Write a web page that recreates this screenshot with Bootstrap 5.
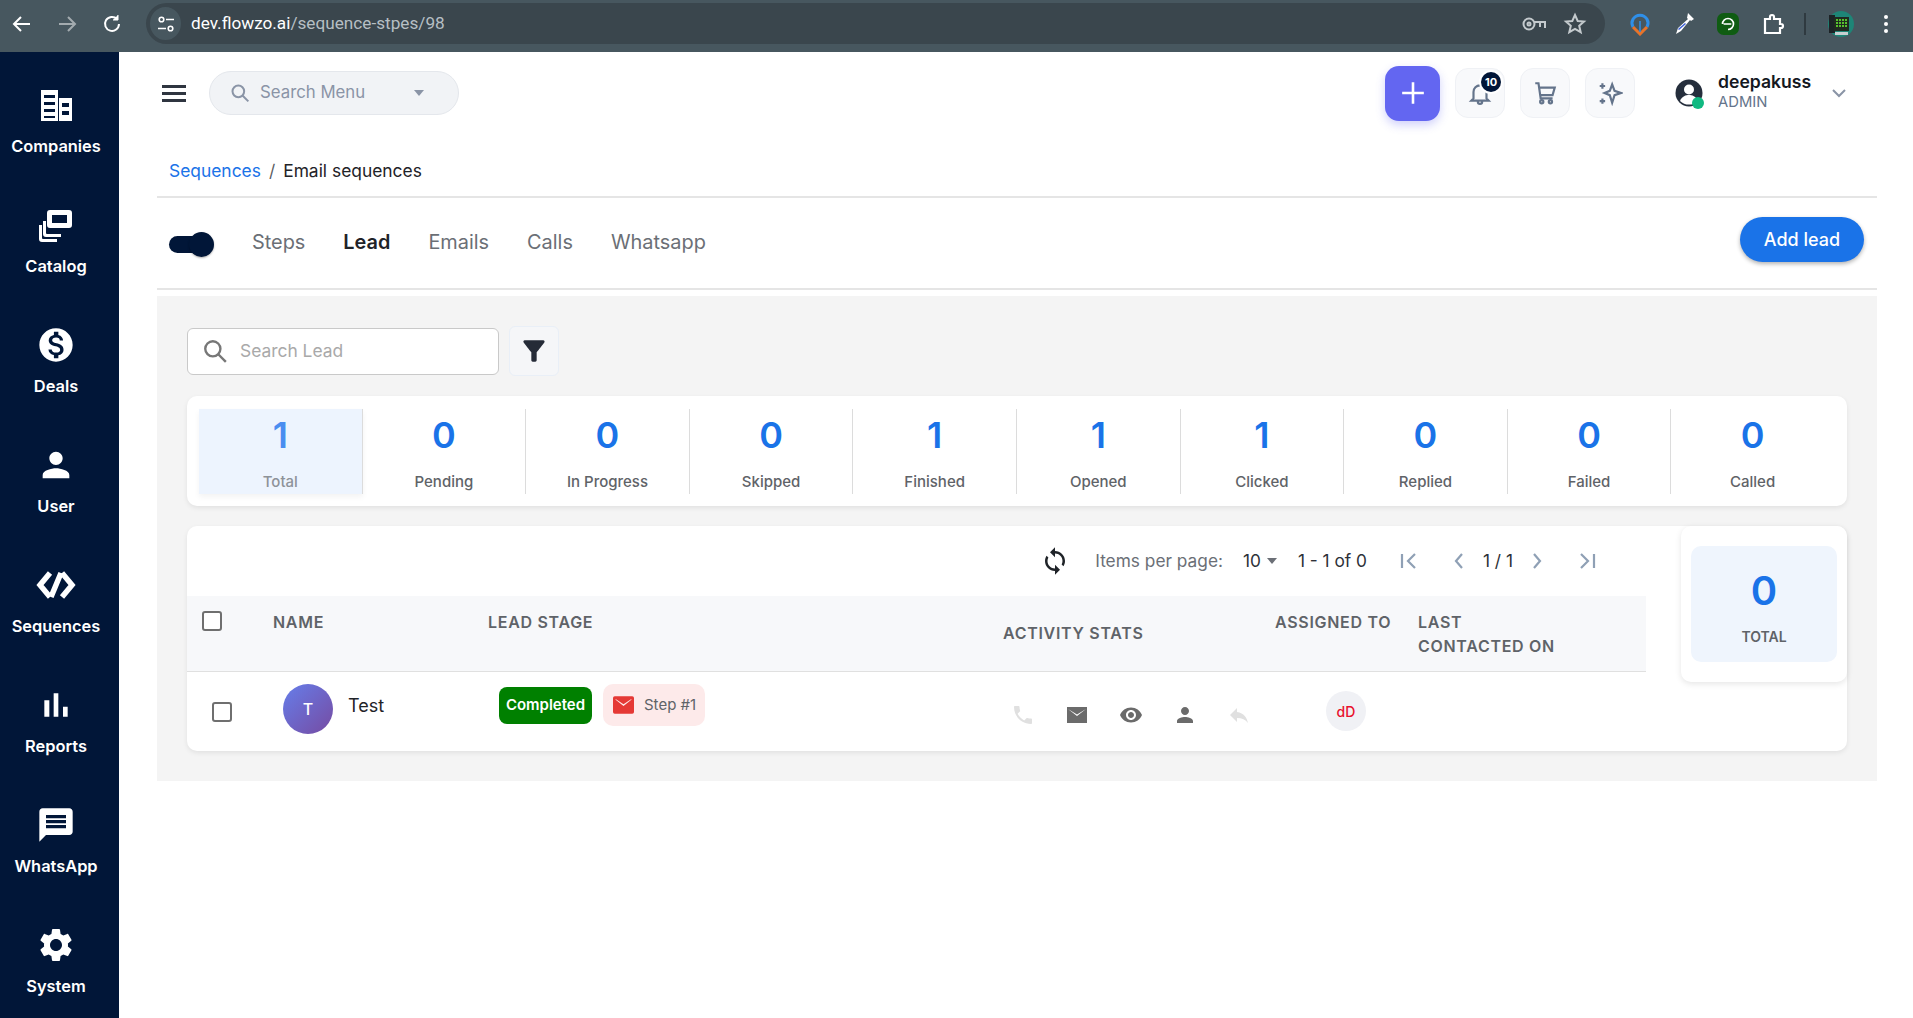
<!DOCTYPE html>
<html lang="en">
<head>
    <meta charset="UTF-8">
    <meta name="viewport" content="width=device-width, initial-scale=1.0">
    <title>Email sequences</title>
    <link href="https://cdn.jsdelivr.net/npm/bootstrap@5.3.0/dist/css/bootstrap.min.css" rel="stylesheet">
    <style>
        html, body { height: 100%; }
        body { font-family: Inter, "Liberation Sans", sans-serif; background: #fff; overflow: hidden; color: #1f2328; }

        /* browser bar */
        .chrome-bar { height: 52px; background: #47575f; padding: 3px 0 8px 0; }
        .chrome-btn { width: 24px; height: 24px; fill: none; stroke: #fff; stroke-width: 2; }
        .chrome-nav { width: 146px; padding-left: 10px; gap: 21px; }
        .chrome-pill { width: 1459px; height: 41px; border-radius: 21px; background: #3a464d; padding: 0 18px 0 4px; }
        .chrome-site { width: 31px; height: 33px; border-radius: 50%; background: #47575f; margin-right: 10px; }
        .chrome-url { font-family: Roboto, sans-serif; font-size: 17.2px; color: #fff; }
        .chrome-url span { color: #b6bfc4; }
        .chrome-exts { padding-left: 24px; gap: 22px; }
        .chrome-key { margin-right: 17px; }
        .chrome-sep { margin-left: -3px; }

        /* sidebar */
        .side-rail { width: 119px; flex: 0 0 119px; background: #011638; padding: 35px 7px 0 0; gap: 42px; height: 966px; overflow: hidden; }
        .side-item { height: 78px; color: #fff; font-size: 16.4px; font-weight: 600; text-decoration: none; gap: 11px; }
        .side-item svg { width: 36px; height: 36px; fill: #fff; }
        .side-item svg.mat-ico { width: 40px; height: 40px; margin: -2px 0; }
        .side-item svg.seq-ico { width: 40px; height: 36px; fill: none; stroke: #fff; stroke-width: 5.5; }

        /* header */
        .main-col { padding: 0 36px 0 38px; }
        .top-head { height: 82px; padding-left: 5px; }
        .menu-burger { width: 24px; height: 17px; border-top: 3px solid #2f3540; border-bottom: 3px solid #2f3540; position: relative; margin-right: 23px; }
        .menu-burger::after { content: ""; position: absolute; left: 0; right: 0; top: 4px; height: 3px; background: #2f3540; }
        .menu-search { width: 250px; height: 44px; border-radius: 22px; background: #f1f3f6; border: 1px solid #e4e7ec; padding: 0 34px 0 20px; color: #8a94a6; font-size: 16.8px; }
        .menu-search svg { width: 20px; height: 20px; margin-right: 10px; }
        .caret-down { width: 0; height: 0; border-left: 5px solid transparent; border-right: 5px solid transparent; border-top: 6px solid #8a94a6; }
        .plus-btn { width: 55px; height: 55px; border-radius: 14px; background: #6366f1; box-shadow: 0 4px 10px rgba(99,102,241,.3); margin-right: 15px; border: 0; }
        .plus-btn svg { width: 26px; height: 26px; stroke: #fff; stroke-width: 2.4; }
        .tool-box { width: 50px; height: 50px; border-radius: 13px; background: #f8f9fb; border: 1px solid #eff1f5; margin-right: 15px; }
        .tool-box svg { width: 26px; height: 26px; fill: none; stroke: #64748b; stroke-width: 2; }
        .note-count { top: 3px; left: 25px; width: 20px; height: 20px; border-radius: 50%; background: #011638; color: #fff; font-size: 11px; font-weight: 700; line-height: 20px; text-align: center; box-shadow: 0 0 0 2px #fff; }
        .user-box { margin-left: 25px; width: 202px; }
        .user-pic { width: 28px; height: 28px; margin-right: 15px; }
        .status-dot { width: 12px; height: 12px; right: -1px; bottom: -2px; background: #10b981; border-radius: 50%; }
        .user-name { font-size: 17.6px; font-weight: 600; line-height: 22px; color: #14181f; margin-top: -3px; }
        .user-role { font-size: 14.8px; line-height: 19px; color: #64748b; }
        .user-chev { width: 16px; height: 16px; margin-left: 20px; fill: none; stroke: #8a94a6; stroke-width: 2; }

        /* breadcrumb and tabs */
        .crumb-wrap { height: 64px; padding: 12px 0 0 12px; border-bottom: 2px solid #e5e5e5; }
        .crumb-wrap .breadcrumb { --bs-breadcrumb-margin-bottom: 0; font-size: 17.4px; }
        .crumb-wrap a { color: #1a73e8; text-decoration: none; }
        .crumb-wrap .breadcrumb-item.active { color: #1f2328; }
        .tab-bar { height: 92px; padding: 0 13px 0 12px; border-bottom: 2px solid #e5e5e5; }
        .side-toggle { width: 45px; height: 25px; margin: 2px 38px 0 0; position: relative; }
        .side-toggle::before { content: ""; position: absolute; left: 0; right: 4px; top: 4px; height: 17px; background: #011638; border-radius: 9px; }
        .side-toggle::after { content: ""; position: absolute; right: 0; top: 0; width: 25px; height: 25px; background: #011638; border-radius: 50%; box-shadow: 0 1px 2px rgba(0,0,0,.3); }
        .tab-links { gap: 38px; }
        .tab-links .nav-link { padding: 0; font-size: 19.9px; color: #6b6f76; margin-top: -1px; }
        .tab-links .nav-link.active { color: #1f2328; font-weight: 600; }
        .add-btn { width: 124px; height: 45px; border-radius: 23px; background: #1a73e8; border: 0; color: #fff; font-size: 18px; font-weight: 500; box-shadow: 0 2px 4px rgba(0,0,0,.3); margin-top: -8px; }

        /* grey panel */
        .lead-panel { margin-top: 6px; background: #f4f4f4; padding: 30px; height: 485px; }
        .lead-search { width: 312px; height: 47px; background: #fff; border: 1px solid #c9c9c9; border-radius: 6px; padding: 0 14px; margin-right: 10px; }
        .lead-search svg { width: 26px; height: 26px; flex: 0 0 26px; fill: none; stroke: #777; stroke-width: 2.2; margin-right: 12px; }
        .lead-search input { border: 0; padding: 0; font-size: 17.4px; background: transparent; box-shadow: none; }
        .lead-search input::placeholder { color: #a9a9a9; }
        .funnel-btn { width: 50px; height: 50px; border-radius: 6px; background: #f5f6f8; border: 1px solid #e9eff7; }
        .funnel-btn svg { width: 32px; height: 32px; fill: #252b37; }

        .stat-strip { margin-top: 20px; background: #fff; border-radius: 10px; padding: 13px 13px 12px 12px; box-shadow: 0 2px 5px rgba(0,0,0,.08); }
        .stat-cell { flex: 1 1 0; height: 85px; border-right: 1px solid #dcdcdc; text-align: center; }
        .stat-cell:last-child { border-right: 0; }
        .stat-cell.is-current { background: #edf4fe; box-shadow: 0 3px 6px rgba(0,0,0,.05); }
        .stat-num { height: 52px; line-height: 52px; font-size: 36px; font-weight: 600; color: #1a73e8; }
        .stat-lbl { margin-top: 9px; line-height: 24px; font-size: 15px; font-weight: 500; color: #5f6368; }
        .is-current .stat-num { color: #4a8df0; }
        .is-current .stat-lbl { color: #8d9299; }

        .table-card { margin-top: 20px; height: 225px; background: #fff; border-radius: 10px; box-shadow: 0 2px 5px rgba(0,0,0,.08); }
        .table-left { width: 1459px; }
        .pager-row { height: 70px; padding-right: 47px; font-size: 17.3px; color: #2d3138; }
        .pager-row svg { fill: none; stroke: #8fa0b5; stroke-width: 2.2; width: 24px; height: 24px; }
        .pager-row svg.sync-ico { fill: #1f2328; stroke: none; width: 30px; height: 30px; margin-right: 25px; }
        .pager-lbl { color: #6b6f76; margin-right: 20px; }
        .pager-size { margin-right: 21px; gap: 6px; }
        .pager-size .caret-down { border-top-color: #6b6f76; }
        .pager-range { margin-right: 30px; }
        .pager-page { margin: 0 12px; }
        .pager-gap { margin-left: 26px; }

        .lead-table { table-layout: fixed; width: 1459px; margin: 0; }
        .lead-table th { background: #f7f8fa; height: 75px; padding: 14px 10px 12px; line-height: 24px; font-size: 16px; font-weight: 600; letter-spacing: .7px; color: #5f6368; vertical-align: top; border-bottom: 1px solid #e0e0e0; text-transform: uppercase; }
        .lead-table th.mid-head { vertical-align: middle; padding-top: 0; padding-bottom: 0; }
        .lead-table td { height: 80px; padding: 0; border: 0; vertical-align: middle; }
        .col-check { width: 76px; }
        .col-name { width: 215px; }
        .col-stage { width: 515px; }
        .col-stats { width: 272px; }
        .col-owner { width: 143px; }
        .col-last { width: 238px; }
        .lead-check.form-check-input { width: 20px; height: 20px; margin: 0; border: 2px solid #6f6f6f; border-radius: 3px; }
        .lead-check.check-head { margin: 1px 0 0 5px; }
        .lead-check.check-row { margin: 3px 0 0 25px; }
        .name-wrap { padding-left: 20px; margin-top: -4px; }
        .lead-avatar { width: 50px; height: 50px; border-radius: 50%; background: linear-gradient(135deg, #667eea, #764ba2); color: #fff; font-size: 16px; font-weight: 500; margin-right: 15px; }
        .lead-name { font-size: 18px; color: #1f2328; margin-top: -8px; }
        .stage-wrap { padding-left: 21px; margin-top: -12px; gap: 11px; }
        .stage-done { width: 93px; height: 37px; border-radius: 8px; background: #008000; color: #fff; font-size: 15px; font-weight: 600; }
        .stage-step { width: 102px; height: 42px; border-radius: 10px; background: #fdeaea; color: #5f6368; font-size: 15px; padding-left: 10px; gap: 10px; }
        .stage-step svg { width: 21px; height: 18px; }
        .act-wrap { padding-left: 18px; gap: 30px; margin-top: 8px; }
        .act-wrap svg { width: 24px; height: 24px; fill: #6b6b6b; }
        .act-wrap svg.act-off { fill: #e0e0e0; }
        .owner-pic { width: 40px; height: 40px; margin-left: 61px; border-radius: 50%; background: #f0f1f5; color: #e8112d; font-size: 14px; font-weight: 500; }

        .total-card { width: 166px; height: 156px; margin-left: 35px; background: #fff; border-radius: 10px; padding: 20px 10px; box-shadow: 0 2px 6px rgba(0,0,0,.1); }
        .total-box { height: 116px; background: #eff5fd; border-radius: 10px; text-align: center; padding-top: 19px; }
        .total-num { font-size: 40px; line-height: 52px; font-weight: 600; color: #1a73e8; }
        .total-lbl { margin-top: 10px; font-size: 14px; line-height: 20px; font-weight: 600; color: #5f6368; }
    </style>
</head>
<body>
    <!-- browser bar -->
    <div class="chrome-bar d-flex align-items-center">
        <div class="chrome-nav d-flex align-items-center">
            <svg class="chrome-btn" viewBox="0 0 24 24"><path d="M20 12H5M11 5l-7 7 7 7"/></svg>
            <svg class="chrome-btn opacity-50" viewBox="0 0 24 24"><path d="M4 12h15M13 5l7 7-7 7"/></svg>
            <svg class="chrome-btn" viewBox="0 0 24 24"><path d="M19 12a7 7 0 1 1-2-5"/><path d="M18 3v5h-5" fill="#fff" stroke-width="1"/></svg>
        </div>
        <div class="chrome-pill d-flex align-items-center">
            <div class="chrome-site d-flex align-items-center justify-content-center">
                <svg width="18" height="18" viewBox="0 0 18 18" fill="none" stroke="#fff" stroke-width="1.6"><circle cx="4.5" cy="4.5" r="2.3"/><path d="M9 4.5h8M1 13.5h8"/><circle cx="13.5" cy="13.5" r="2.3"/></svg>
            </div>
            <div class="chrome-url">dev.flowzo.ai<span>/sequence-stpes/98</span></div>
            <svg class="ms-auto chrome-key" width="24" height="16" viewBox="0 0 24 16" fill="none" stroke="#c4cacd" stroke-width="2"><circle cx="7" cy="8" r="5.5"/><circle cx="7" cy="8" r="1.5"/><path d="M12 6h11v6M18 6v5"/></svg>
            <svg width="24" height="24" viewBox="0 0 24 24" fill="none" stroke="#c4cacd" stroke-width="2"><path d="M12 3l2.700 6 6.300.6-4.800 4.200 1.500 6.400L12 17l-5.700 3.200 1.500-6.400L3 9.600 9.300 9z"/></svg>
        </div>
        <div class="chrome-exts d-flex align-items-center flex-grow-1">
            <svg width="22" height="24" viewBox="0 0 22 24" fill="none"><path d="M4 15a8 8 0 1 1 14 0" stroke="#2f8fe8" stroke-width="3"/><path d="M4 15l7 7 7-7" stroke="#e8742a" stroke-width="3"/><path d="M11 9v11" stroke="#2f8fe8" stroke-width="1.5"/></svg>
            <svg width="22" height="24" viewBox="0 0 22 24" fill="#fff"><path d="M15 1l6 6-3 2-1-1-9 11-5 3 2-6 10-9-1-1z"/><path d="M5 17l7-6 1 1-7 6z" fill="#3f62d8"/></svg>
            <svg width="22" height="22" viewBox="0 0 20 20"><rect width="20" height="20" rx="6" fill="#0f5c12"/><path d="M5 10a5 5 0 1 1 5 5M6 10h7" fill="none" stroke="#fff" stroke-width="1.500"/></svg>
            <svg width="24" height="24" viewBox="0 0 24 24" fill="none" stroke="#fff" stroke-width="2.200"><path d="M4 7h5V5a2 2 0 0 1 4 0v2h6v5h1a2 2 0 0 1 0 4h-1v5H4z"/></svg>
            <svg class="chrome-sep" width="2" height="22" viewBox="0 0 2 22"><rect width="2" height="22" fill="#2f3a40"/></svg>
            <svg width="26" height="26" viewBox="0 0 26 26"><circle cx="13" cy="13" r="13" fill="#1e8577"/><rect x="1" y="4" width="6" height="18" fill="#1c2326"/><rect x="6" y="6" width="15" height="14" fill="#202a20"/><path d="M8 9h11M8 12h11M8 15h11" stroke="#57c22e" stroke-width="2" stroke-dasharray="2 1"/><rect x="7" y="21" width="13" height="3" fill="#c8ced0"/></svg>
            <svg class="ms-2" width="4" height="18" viewBox="0 0 4 18" fill="#fff"><circle cx="2" cy="2" r="2"/><circle cx="2" cy="9" r="2"/><circle cx="2" cy="16" r="2"/></svg>
        </div>
    </div>

    <div class="d-flex">
        <!-- sidebar -->
        <nav class="side-rail d-flex flex-column align-items-center">
            <a class="side-item d-flex flex-column align-items-center" href="#">
                <svg viewBox="0 0 36 36"><path d="M3 3h17v31H3zM21 11h13v23H21z"/><path d="M6 8h11v3H6zM6 15h11v3H6zM6 22h11v3H6zM6 29h11v2H6zM24 16h7v4h-7zM24 24h7v4h-7z" fill="#011638"/></svg>
                Companies
            </a>
            <a class="side-item d-flex flex-column align-items-center" href="#">
                <svg viewBox="0 0 36 36"><path d="M12 3h19a3 3 0 0 1 3 3v12a3 3 0 0 1-3 3H12a3 3 0 0 1-3-3V6a3 3 0 0 1 3-3zm2 5v8h15V8z" fill-rule="evenodd"/><path d="M5 14v13a3 3 0 0 0 3 3h15v-3H9a1 1 0 0 1-1-1V14zM1 18v14a3 3 0 0 0 3 3h15v-3H5a1 1 0 0 1-1-1V18z"/></svg>
                Catalog
            </a>
            <a class="side-item d-flex flex-column align-items-center" href="#">
                <svg class="mat-ico" viewBox="0 0 24 24"><path d="M12 2C6.480 2 2 6.480 2 12s4.480 10 10 10 10-4.480 10-10S17.520 2 12 2zm1.410 16.090V20h-2.670v-1.930c-1.710-.360-3.160-1.460-3.270-3.400h1.960c.100 1.050.820 1.870 2.650 1.870 1.960 0 2.400-.980 2.400-1.590 0-.830-.440-1.610-2.670-2.140-2.480-.600-4.180-1.620-4.180-3.670 0-1.720 1.390-2.840 3.110-3.210V4h2.670v1.950c1.860.450 2.790 1.860 2.850 3.390H14.300c-.050-1.110-.640-1.870-2.220-1.870-1.500 0-2.400.680-2.400 1.640 0 .840.650 1.390 2.670 1.910s4.180 1.390 4.180 3.910c-.010 1.830-1.380 2.830-3.120 3.160z"/></svg>
                Deals
            </a>
            <a class="side-item d-flex flex-column align-items-center" href="#">
                <svg class="mat-ico" viewBox="0 0 24 24"><path d="M12 12c2.210 0 4-1.790 4-4s-1.790-4-4-4-4 1.790-4 4 1.790 4 4 4zm0 2c-2.670 0-8 1.340-8 4v2h16v-2c0-2.660-5.330-4-8-4z"/></svg>
                User
            </a>
            <a class="side-item d-flex flex-column align-items-center" href="#">
                <svg class="seq-ico" viewBox="0 0 40 36"><path d="M14 6L4 18l10 12M26 6l10 12-10 12M25 6L15 30"/></svg>
                Sequences
            </a>
            <a class="side-item d-flex flex-column align-items-center" href="#">
                <svg class="mat-ico" viewBox="0 0 24 24"><path d="M5 9.200h3V19H5zM10.600 5h2.800v14h-2.800zm5.600 8H19v6h-2.800z"/></svg>
                Reports
            </a>
            <a class="side-item d-flex flex-column align-items-center" href="#">
                <svg class="mat-ico" viewBox="0 0 24 24"><path d="M20 2H4c-1.100 0-1.990.900-1.990 2L2 22l4-4h14c1.100 0 2-.900 2-2V4c0-1.100-.900-2-2-2zm-2 12H6v-2h12v2zm0-3H6V9h12v2zm0-3H6V6h12v2z"/></svg>
                WhatsApp
            </a>
            <a class="side-item d-flex flex-column align-items-center" href="#">
                <svg class="mat-ico" viewBox="0 0 24 24"><path d="M19.140 12.940c.040-.300.060-.610.060-.940 0-.320-.020-.640-.070-.940l2.030-1.580c.180-.140.230-.410.120-.610l-1.920-3.320c-.120-.220-.370-.290-.590-.220l-2.390.960c-.500-.380-1.030-.700-1.620-.940l-.360-2.540c-.040-.240-.240-.410-.480-.410h-3.840c-.240 0-.430.170-.470.410l-.360 2.540c-.590.240-1.130.570-1.620.940l-2.390-.960c-.220-.080-.470 0-.590.220L2.740 8.870c-.120.210-.080.470.120.610l2.030 1.580c-.050.300-.090.630-.090.940s.020.640.070.940l-2.030 1.580c-.180.140-.230.410-.12.610l1.920 3.320c.120.220.370.290.590.220l2.390-.960c.500.380 1.030.700 1.620.940l.360 2.540c.050.240.240.410.480.410h3.840c.240 0 .440-.170.470-.41l.360-2.540c.590-.240 1.130-.560 1.620-.940l2.390.960c.220.080.470 0 .590-.220l1.920-3.320c.120-.220.070-.470-.12-.610l-2.010-1.580zM12 15.600c-1.980 0-3.600-1.620-3.600-3.600s1.620-3.600 3.600-3.600 3.600 1.620 3.600 3.600-1.620 3.600-3.600 3.600z"/></svg>
                System
            </a>
        </nav>

        <div class="main-col flex-grow-1">
            <!-- top header -->
            <header class="top-head d-flex align-items-center">
                <div class="menu-burger"></div>
                <div class="menu-search d-flex align-items-center">
                    <svg viewBox="0 0 24 24" fill="none" stroke="#8a94a6" stroke-width="2.400"><circle cx="10" cy="10" r="7"/><path d="M15 15l7 7"/></svg>
                    <span>Search Menu</span>
                    <span class="caret-down ms-auto"></span>
                </div>
                <button class="plus-btn ms-auto d-flex align-items-center justify-content-center" type="button">
                    <svg viewBox="0 0 24 24"><path d="M12 2v20M2 12h20"/></svg>
                </button>
                <div class="tool-box position-relative d-flex align-items-center justify-content-center">
                    <svg viewBox="0 0 24 24"><path d="M6 17V11a6 6 0 0 1 12 0v6l2 2H4zM10 20a2 2 0 0 0 4 0"/></svg>
                    <span class="note-count position-absolute">10</span>
                </div>
                <div class="tool-box d-flex align-items-center justify-content-center">
                    <svg viewBox="0 0 24 24"><path d="M3 3h3l2 14h11M7 7h14l-2 7H8"/><circle cx="9" cy="20" r="1.500"/><circle cx="17" cy="20" r="1.500"/></svg>
                </div>
                <div class="tool-box d-flex align-items-center justify-content-center">
                    <svg viewBox="0 0 24 24"><path d="M14 4l2.200 6 5.800 2-5.800 2-2.200 7-2.200-7-4.800-2 4.800-2z"/><path d="M5 3v5M2.500 5.500h5M5 17v5M2.500 19.500h5"/></svg>
                </div>
                <div class="user-box d-flex align-items-center">
                    <div class="user-pic position-relative">
                        <svg width="28" height="28" viewBox="0 0 28 28"><circle cx="14" cy="14" r="13.500" fill="#252e3c"/><circle cx="14" cy="10.500" r="5" fill="#fff"/><path d="M5 22c2-5 6-6 9-6s7 1 9 6a13 13 0 0 1-18 0z" fill="#fff"/></svg>
                        <span class="status-dot position-absolute"></span>
                    </div>
                    <div>
                        <div class="user-name">deepakuss</div>
                        <div class="user-role">ADMIN</div>
                    </div>
                    <svg class="user-chev" viewBox="0 0 16 16"><path d="M2 5l6 6 6-6"/></svg>
                </div>
            </header>

            <!-- breadcrumb -->
            <div class="crumb-wrap d-flex align-items-center">
                <ol class="breadcrumb">
                    <li class="breadcrumb-item"><a href="#">Sequences</a></li>
                    <li class="breadcrumb-item active">Email sequences</li>
                </ol>
            </div>

            <!-- tabs -->
            <div class="tab-bar d-flex align-items-center">
                <div class="side-toggle"></div>
                <ul class="nav tab-links">
                    <li class="nav-item"><a class="nav-link" href="#">Steps</a></li>
                    <li class="nav-item"><a class="nav-link active" href="#">Lead</a></li>
                    <li class="nav-item"><a class="nav-link" href="#">Emails</a></li>
                    <li class="nav-item"><a class="nav-link" href="#">Calls</a></li>
                    <li class="nav-item"><a class="nav-link" href="#">Whatsapp</a></li>
                </ul>
                <button class="btn add-btn ms-auto" type="button">Add lead</button>
            </div>

            <div class="lead-panel">
                <div class="d-flex align-items-center">
                    <div class="lead-search d-flex align-items-center">
                        <svg viewBox="0 0 24 24"><circle cx="10" cy="10" r="7"/><path d="M15 15l7 7"/></svg>
                        <input class="form-control" type="text" placeholder="Search Lead">
                    </div>
                    <button class="funnel-btn d-flex align-items-center justify-content-center p-0" type="button">
                        <svg viewBox="0 0 24 24"><path d="M4.250 5.610C6.270 8.200 10 13 10 13v6c0 .550.450 1 1 1h2c.550 0 1-.450 1-1v-6s3.720-4.800 5.740-7.390c.510-.660.040-1.610-.790-1.610H5.040c-.830 0-1.300.950-.790 1.610z"/></svg>
                    </button>
                </div>

                <!-- counters -->
                <div class="stat-strip d-flex">
                    <div class="stat-cell is-current"><div class="stat-num">1</div><div class="stat-lbl">Total</div></div>
                    <div class="stat-cell"><div class="stat-num">0</div><div class="stat-lbl">Pending</div></div>
                    <div class="stat-cell"><div class="stat-num">0</div><div class="stat-lbl">In Progress</div></div>
                    <div class="stat-cell"><div class="stat-num">0</div><div class="stat-lbl">Skipped</div></div>
                    <div class="stat-cell"><div class="stat-num">1</div><div class="stat-lbl">Finished</div></div>
                    <div class="stat-cell"><div class="stat-num">1</div><div class="stat-lbl">Opened</div></div>
                    <div class="stat-cell"><div class="stat-num">1</div><div class="stat-lbl">Clicked</div></div>
                    <div class="stat-cell"><div class="stat-num">0</div><div class="stat-lbl">Replied</div></div>
                    <div class="stat-cell"><div class="stat-num">0</div><div class="stat-lbl">Failed</div></div>
                    <div class="stat-cell"><div class="stat-num">0</div><div class="stat-lbl">Called</div></div>
                </div>

                <div class="table-card d-flex">
                    <div class="table-left">
                        <div class="pager-row d-flex align-items-center justify-content-end">
                            <svg class="sync-ico" viewBox="0 0 24 24"><path d="M12 4V1L8 5l4 4V6c3.310 0 6 2.690 6 6 0 1.010-.250 1.970-.700 2.800l1.460 1.460C19.540 15.030 20 13.570 20 12c0-4.420-3.580-8-8-8zm0 14c-3.310 0-6-2.690-6-6 0-1.010.250-1.970.700-2.800L5.240 7.740C4.460 8.970 4 10.430 4 12c0 4.420 3.580 8 8 8v3l4-4-4-4v3z"/></svg>
                            <span class="pager-lbl">Items per page:</span>
                            <span class="pager-size d-flex align-items-center">10 <span class="caret-down"></span></span>
                            <span class="pager-range">1 - 1 of 0</span>
                            <svg viewBox="0 0 24 24"><path d="M5 5v14M18 5l-7 7 7 7"/></svg>
                            <svg class="pager-gap" viewBox="0 0 24 24"><path d="M15 5l-6 7 6 7"/></svg>
                            <span class="pager-page">1 / 1</span>
                            <svg viewBox="0 0 24 24"><path d="M9 5l6 7-6 7"/></svg>
                            <svg class="pager-gap" viewBox="0 0 24 24"><path d="M6 5l7 7-7 7M19 5v14"/></svg>
                        </div>
                        <table class="table lead-table">
                            <colgroup>
                                <col class="col-check"><col class="col-name"><col class="col-stage"><col class="col-stats"><col class="col-owner"><col class="col-last">
                            </colgroup>
                            <thead>
                                <tr>
                                    <th><input class="form-check-input lead-check check-head" type="checkbox" aria-label="Select all"></th>
                                    <th>Name</th>
                                    <th>Lead Stage</th>
                                    <th class="mid-head">Activity Stats</th>
                                    <th>Assigned To</th>
                                    <th>Last<br>Contacted On</th>
                                </tr>
                            </thead>
                            <tbody>
                                <tr>
                                    <td><input class="form-check-input lead-check check-row" type="checkbox" aria-label="Select lead"></td>
                                    <td>
                                        <div class="name-wrap d-flex align-items-center">
                                            <div class="lead-avatar d-flex align-items-center justify-content-center">T</div>
                                            <span class="lead-name">Test</span>
                                        </div>
                                    </td>
                                    <td>
                                        <div class="stage-wrap d-flex align-items-center">
                                            <span class="stage-done d-flex align-items-center justify-content-center">Completed</span>
                                            <span class="stage-step d-flex align-items-center">
                                                <svg viewBox="0 0 24 20"><path d="M2 0h20a2 2 0 0 1 2 2v16a2 2 0 0 1-2 2H2a2 2 0 0 1-2-2V2a2 2 0 0 1 2-2zm1 4l9 7 9-7v-1l-9 6-9-6z" fill="#e53935" fill-rule="evenodd"/></svg>
                                                Step #1
                                            </span>
                                        </div>
                                    </td>
                                    <td>
                                        <div class="act-wrap d-flex align-items-center">
                                            <svg class="act-off" viewBox="0 0 24 24"><path d="M6.620 10.790c1.440 2.830 3.760 5.140 6.590 6.590l2.200-2.200c.270-.270.670-.360 1.020-.240 1.120.370 2.330.570 3.570.570.550 0 1 .450 1 1V20c0 .550-.450 1-1 1-9.390 0-17-7.610-17-17 0-.550.450-1 1-1h3.500c.550 0 1 .450 1 1 0 1.250.200 2.450.570 3.570.110.350.030.740-.250 1.020l-2.200 2.200z"/></svg>
                                            <svg viewBox="0 0 24 24"><path d="M2 4h20v16H2zM3 6l9 7 9-7-9 5.500z" fill-rule="evenodd"/></svg>
                                            <svg viewBox="0 0 24 24"><path d="M12 4.500C7 4.500 2.730 7.610 1 12c1.730 4.390 6 7.500 11 7.500s9.270-3.110 11-7.500c-1.730-4.390-6-7.500-11-7.500zM12 17c-2.760 0-5-2.240-5-5s2.240-5 5-5 5 2.240 5 5-2.240 5-5 5zm0-8c-1.660 0-3 1.340-3 3s1.340 3 3 3 3-1.340 3-3-1.340-3-3-3z"/></svg>
                                            <svg viewBox="0 0 24 24"><path d="M12 12c2.210 0 4-1.790 4-4s-1.790-4-4-4-4 1.790-4 4 1.790 4 4 4zm0 2c-2.670 0-8 1.340-8 4v2h16v-2c0-2.660-5.330-4-8-4z"/></svg>
                                            <svg class="act-off" viewBox="0 0 24 24"><path d="M10 9V5l-7 7 7 7v-4.100c5 0 8.500 1.600 11 5.100-1-5-4-10-11-11z"/></svg>
                                        </div>
                                    </td>
                                    <td><div class="owner-pic d-flex align-items-center justify-content-center">dD</div></td>
                                    <td></td>
                                </tr>
                            </tbody>
                        </table>
                    </div>
                    <div class="total-card">
                        <div class="total-box">
                            <div class="total-num">0</div>
                            <div class="total-lbl">TOTAL</div>
                        </div>
                    </div>
                </div>
            </div>
        </div>
    </div>

    <script src="https://cdn.jsdelivr.net/npm/bootstrap@5.3.0/dist/js/bootstrap.bundle.min.js"></script>
</body>
</html>
